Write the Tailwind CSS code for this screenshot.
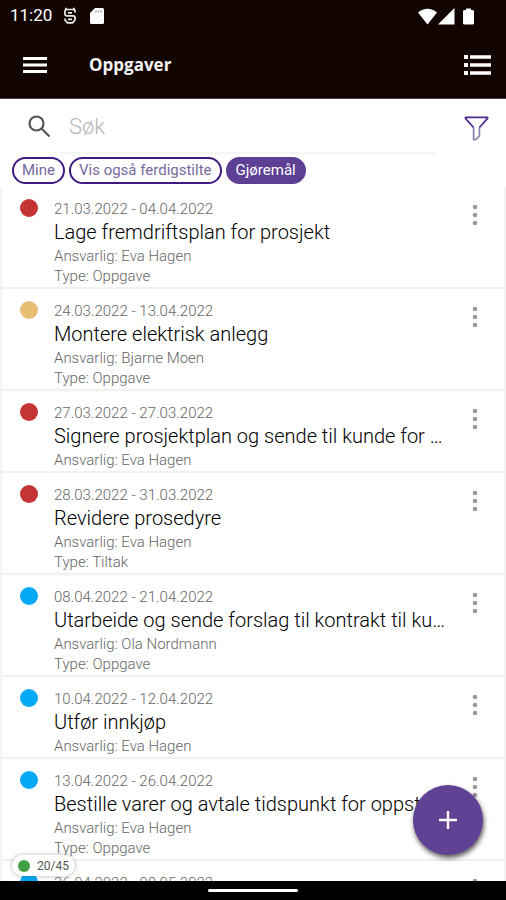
<!DOCTYPE html>
<html lang="no">
<head>
<meta charset="utf-8">
<meta name="viewport" content="width=device-width, initial-scale=1">
<title>Oppgaver</title>
<script src="https://cdn.jsdelivr.net/npm/@tailwindcss/browser@4"></script>
</head>
<body class="relative flex h-screen flex-col overflow-hidden bg-white font-[Roboto,sans-serif] text-black">
<svg class="hidden" aria-hidden="true">
  <symbol id="more" viewBox="0 0 8 24"><circle cx="4" cy="4" r="2.300"/><circle cx="4" cy="12" r="2.300"/><circle cx="4" cy="20" r="2.300"/></symbol>
</svg>

<header class="shrink-0 border-b border-[#4a4044] bg-[#120500] text-white">
  <div class="flex h-8 items-center pr-8 pl-[10px]">
    <span class="w-[53px] text-[17px]">11:20</span>
    <svg class="h-[18px] w-[14px]" viewBox="0 0 14 18" fill="none" stroke="#eee" stroke-width="1.700"><path d="M12 5.500V3.800Q12 2.500 10.500 2.500H3.500Q2 2.500 2 4V7Q2 8.800 4 8.800H10Q12 8.800 12 10.500V13L9.500 15.800H4.500L2 13V11.500M5 5.800H9M5 12.300H9M3 2.500V.8M11 2.500V.8"/></svg>
    <svg class="ml-[13px] h-4 w-[14px]" viewBox="0 0 14 16"><path fill="#fff" d="M5 0H12.500Q14 0 14 1.500V14.500Q14 16 12.500 16H1.500Q0 16 0 14.500V5Z"/><path stroke="#999" stroke-width="1.200" d="M6 2.200V4.500M8.500 2.200V4.500M11 2.200V4.500"/></svg>
    <svg class="ml-auto h-[17px] w-14" viewBox="0 0 56 17" fill="#fff"><path d="M0 4.500Q9.500-3 19 4.500L9.500 16.500ZM36.500 0V16.500H20ZM46 2H48V.5H53V2H54.500Q56 2 56 3.500V15Q56 16.500 54.500 16.500H46.500Q45 16.500 45 15V3.500Q45 2 46 2Z"/></svg>
  </div>
  <div class="flex h-[66px] items-center pr-[14px] pl-[23px]">
    <button type="button" aria-label="Meny"><svg class="block h-4 w-6" viewBox="0 0 24 16" fill="#fff"><path d="M0 0H24V3H0ZM0 6.500H24V9.500H0ZM0 13H24V16H0Z"/></svg></button>
    <h1 class="ml-[42px] font-['Open_Sans',sans-serif] text-[17px] font-bold text-[#f5f5f5]">Oppgaver</h1>
    <button type="button" aria-label="Listevisning" class="ml-auto"><svg class="block h-5 w-7" viewBox="0 0 28 20" fill="#fff"><path d="M0 0H4V4H0ZM6 .300H27V3.700H6ZM0 8H4V12H0ZM6 8.300H27V11.700H6ZM0 16H4V20H0ZM6 16.300H27V19.700H6Z"/></svg></button>
  </div>
</header>

<section class="shrink-0">
  <div class="flex h-[55px] pr-[17px] pl-7">
    <svg class="mt-4 size-[23px] shrink-0" viewBox="0 0 23 23" fill="none" stroke="#555" stroke-width="2.200"><circle cx="8.500" cy="8.500" r="7"/><path d="M13.500 13.500L21.500 21.500"/></svg>
    <input type="search" aria-label="Søk" placeholder="Søk" class="ml-[10px] min-w-0 flex-1 border-b-2 border-[#f5f5f5] px-2 pt-[2px] text-[22px] font-light outline-none placeholder:text-[#b8b8b8]">
    <button type="button" aria-label="Filter" class="ml-7 self-start pt-4"><svg class="block h-[27px] w-[25px]" viewBox="0 0 26 27" fill="none" stroke-width="1.800" stroke-linejoin="round"><path stroke="#8f83b3" d="M10 12.500V25L12 25L16 21.500V12.500"/><path stroke="#4b2a8c" d="M10 12.500L1.500 3V2H24.500V3L16 12.500"/></svg></button>
  </div>
  <div class="flex h-[33px] items-start gap-1 px-3 pt-[3px] text-[15px]">
    <button type="button" class="h-[27px] rounded-full border-2 border-[#3f1a80] px-2 text-[#77699f]">Mine</button>
    <button type="button" class="h-[27px] rounded-full border-2 border-[#3f1a80] px-2 text-[#77699f]">Vis også ferdigstilte</button>
    <button type="button" class="h-[27px] rounded-full border-2 border-[#5d3f94] bg-[#5d3f94] px-2 text-white">Gjøremål</button>
  </div>
</section>

<main class="min-h-0 flex-1 overflow-hidden border-x-2 border-[#f3f3f3]">
<ul>
  <li class="flex border-b-2 border-[#f1f1f1] pt-3 pr-[25px] pb-px pl-[18px]">
    <span class="size-[18px] shrink-0 rounded-full bg-[#c43434]"></span>
    <div class="ml-4 min-w-0 flex-1 text-[15px] leading-5 font-light text-[#666]">
      <p>21.03.2022 - 04.04.2022</p>
      <h2 class="truncate text-[20px] leading-[27px] text-black">Lage fremdriftsplan for prosjekt</h2>
      <p>Ansvarlig: Eva Hagen</p>
      <p>Type: Oppgave</p>
    </div>
    <button type="button" aria-label="Flere valg" class="ml-5 self-start pt-1"><svg class="block h-6 w-2 fill-[#999]"><use href="#more"/></svg></button>
  </li>
  <li class="flex border-b-2 border-[#f1f1f1] pt-3 pr-[25px] pb-px pl-[18px]">
    <span class="size-[18px] shrink-0 rounded-full bg-[#e8be74]"></span>
    <div class="ml-4 min-w-0 flex-1 text-[15px] leading-5 font-light text-[#666]">
      <p>24.03.2022 - 13.04.2022</p>
      <h2 class="truncate text-[20px] leading-[27px] text-black">Montere elektrisk anlegg</h2>
      <p>Ansvarlig: Bjarne Moen</p>
      <p>Type: Oppgave</p>
    </div>
    <button type="button" aria-label="Flere valg" class="ml-5 self-start pt-1"><svg class="block h-6 w-2 fill-[#999]"><use href="#more"/></svg></button>
  </li>
  <li class="flex border-b-2 border-[#f1f1f1] pt-3 pr-[25px] pb-px pl-[18px]">
    <span class="size-[18px] shrink-0 rounded-full bg-[#c43434]"></span>
    <div class="ml-4 min-w-0 flex-1 text-[15px] leading-5 font-light text-[#666]">
      <p>27.03.2022 - 27.03.2022</p>
      <h2 class="truncate text-[20px] leading-[27px] text-black">Signere prosjektplan og sende til kunde for signering</h2>
      <p>Ansvarlig: Eva Hagen</p>
    </div>
    <button type="button" aria-label="Flere valg" class="ml-5 self-start pt-1"><svg class="block h-6 w-2 fill-[#999]"><use href="#more"/></svg></button>
  </li>
  <li class="flex border-b-2 border-[#f1f1f1] pt-3 pr-[25px] pb-px pl-[18px]">
    <span class="size-[18px] shrink-0 rounded-full bg-[#c43434]"></span>
    <div class="ml-4 min-w-0 flex-1 text-[15px] leading-5 font-light text-[#666]">
      <p>28.03.2022 - 31.03.2022</p>
      <h2 class="truncate text-[20px] leading-[27px] text-black">Revidere prosedyre</h2>
      <p>Ansvarlig: Eva Hagen</p>
      <p>Type: Tiltak</p>
    </div>
    <button type="button" aria-label="Flere valg" class="ml-5 self-start pt-1"><svg class="block h-6 w-2 fill-[#999]"><use href="#more"/></svg></button>
  </li>
  <li class="flex border-b-2 border-[#f1f1f1] pt-3 pr-[25px] pb-px pl-[18px]">
    <span class="size-[18px] shrink-0 rounded-full bg-[#03a9f4]"></span>
    <div class="ml-4 min-w-0 flex-1 text-[15px] leading-5 font-light text-[#666]">
      <p>08.04.2022 - 21.04.2022</p>
      <h2 class="truncate text-[20px] leading-[27px] text-black">Utarbeide og sende forslag til kontrakt til kunde</h2>
      <p>Ansvarlig: Ola Nordmann</p>
      <p>Type: Oppgave</p>
    </div>
    <button type="button" aria-label="Flere valg" class="ml-5 self-start pt-1"><svg class="block h-6 w-2 fill-[#999]"><use href="#more"/></svg></button>
  </li>
  <li class="flex border-b-2 border-[#f1f1f1] pt-3 pr-[25px] pb-px pl-[18px]">
    <span class="size-[18px] shrink-0 rounded-full bg-[#03a9f4]"></span>
    <div class="ml-4 min-w-0 flex-1 text-[15px] leading-5 font-light text-[#666]">
      <p>10.04.2022 - 12.04.2022</p>
      <h2 class="truncate text-[20px] leading-[27px] text-black">Utfør innkjøp</h2>
      <p>Ansvarlig: Eva Hagen</p>
    </div>
    <button type="button" aria-label="Flere valg" class="ml-5 self-start pt-1"><svg class="block h-6 w-2 fill-[#999]"><use href="#more"/></svg></button>
  </li>
  <li class="flex border-b-2 border-[#f1f1f1] pt-3 pr-[25px] pb-px pl-[18px]">
    <span class="size-[18px] shrink-0 rounded-full bg-[#03a9f4]"></span>
    <div class="ml-4 min-w-0 flex-1 text-[15px] leading-5 font-light text-[#666]">
      <p>13.04.2022 - 26.04.2022</p>
      <h2 class="truncate text-[20px] leading-[27px] text-black">Bestille varer og avtale tidspunkt for oppstart</h2>
      <p>Ansvarlig: Eva Hagen</p>
      <p>Type: Oppgave</p>
    </div>
    <button type="button" aria-label="Flere valg" class="ml-5 self-start pt-1"><svg class="block h-6 w-2 fill-[#999]"><use href="#more"/></svg></button>
  </li>
  <li class="flex pt-3 pr-[25px] pl-[18px]">
    <span class="size-[18px] shrink-0 rounded-full bg-[#03a9f4]"></span>
    <div class="ml-4 min-w-0 flex-1 text-[15px] leading-5 font-light text-[#666]">
      <p>26.04.2022 - 08.05.2022</p>
    </div>
    <button type="button" aria-label="Flere valg" class="ml-5 self-start pt-1"><svg class="block h-6 w-2 fill-[#999]"><use href="#more"/></svg></button>
  </li>
</ul>
</main>

<footer class="z-10 flex h-[19px] shrink-0 items-center justify-center bg-black"><span class="h-[3px] w-[90px] rounded-full bg-white"></span></footer>

<div class="absolute bottom-6 left-3 flex h-[21px] items-center gap-[7px] rounded-full bg-white px-[6px] text-[12px] text-[#555] shadow-[0_0_4px_rgba(0,0,0,0.3)]"><span class="size-3 rounded-full bg-[#43a047]"></span>20/45</div>
<button type="button" aria-label="Ny oppgave" class="absolute right-[23px] bottom-[45px] flex size-[70px] items-center justify-center rounded-full bg-[#5f4293] shadow-[1px_3px_5px_rgba(0,0,0,0.65)]"><svg class="size-[18px]" viewBox="0 0 18 18" stroke="#fff" stroke-width="2.400"><path d="M9 0V18M0 9H18"/></svg></button>
</body>
</html>
